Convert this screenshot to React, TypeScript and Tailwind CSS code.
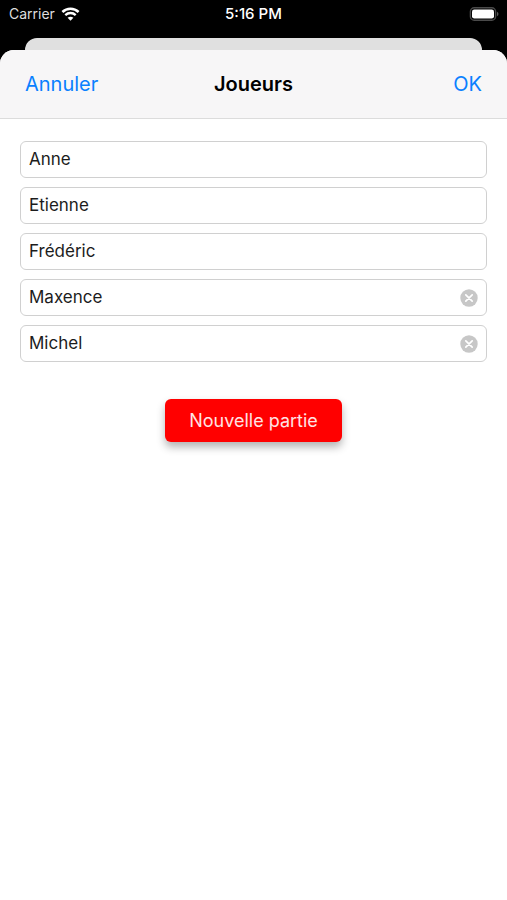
import { useState } from "react";

interface Player {
  id: number;
  name: string;
  clearable: boolean;
}

const INITIAL_PLAYERS: Player[] = [
  { id: 1, name: "Anne", clearable: false },
  { id: 2, name: "Etienne", clearable: false },
  { id: 3, name: "Frédéric", clearable: false },
  { id: 4, name: "Maxence", clearable: true },
  { id: 5, name: "Michel", clearable: true },
];

function WifiIcon() {
  return (
    <svg width="19" height="14" viewBox="0 0 18 14" fill="none" stroke="white" aria-hidden="true">
      <path d="M0.9 5C5.4 0.5 12.6 0.5 17.1 5" strokeWidth="2.5" />
      <path d="M3.8 8.1C6.7 5.3 11.3 5.3 14.2 8.1" strokeWidth="2.3" />
      <path d="M9 13.7L6.1 10.8C7.8 9.3 10.2 9.3 11.9 10.8Z" fill="white" stroke="none" />
    </svg>
  );
}

function BatteryIcon() {
  return (
    <svg width="30" height="14" viewBox="0 0 30 14" fill="none" aria-hidden="true">
      <rect x="1.4" y="0.8" width="25.2" height="12.4" rx="3.8" stroke="#4a4a4a" strokeWidth="1.4" />
      <rect x="3" y="2.4" width="22" height="9.2" rx="2.3" fill="white" />
      <path d="M28 4.8C30 5.6 30 8.4 28 9.2Z" fill="#5a5a5a" />
    </svg>
  );
}

function ClearIcon() {
  return (
    <svg width="18" height="18" viewBox="0 0 18 18" fill="none" aria-hidden="true">
      <circle cx="9" cy="9" r="8.7" fill="#c7c7c7" />
      <path d="M5.8 5.8L12.2 12.2M12.2 5.8L5.8 12.2" stroke="white" strokeWidth="1.7" strokeLinecap="round" />
    </svg>
  );
}

function StatusBar() {
  return (
    <div className="grid h-[38px] grid-cols-3 items-start px-2 pt-1 text-sm leading-5 text-white">
      <div className="flex items-center gap-1.5 pl-px text-[#dedede]">
        <span>Carrier</span>
        <WifiIcon />
      </div>
      <div className="text-center text-[15px] font-medium">5:16 PM</div>
      <div className="flex h-5 items-center justify-end">
        <BatteryIcon />
      </div>
    </div>
  );
}

export default function App() {
  const [players, setPlayers] = useState(INITIAL_PLAYERS);

  const rename = (id: number, name: string) => {
    setPlayers((list) => list.map((p) => (p.id === id ? { ...p, name } : p)));
  };

  return (
    <div className="flex min-h-screen flex-col bg-black font-['Inter','Liberation_Sans',sans-serif]">
      <StatusBar />

      {/* Edge of the screen behind the sheet */}
      <div className="mx-[25px] h-3 rounded-t-xl bg-[#e0e0e0]" />

      <main className="flex flex-1 flex-col overflow-hidden rounded-t-[14px] bg-white">
        <header className="grid h-[69px] grid-cols-3 items-center border-b border-[#dcdcdc] bg-[#f7f6f7] px-[25px] text-xl">
          <button type="button" className="justify-self-start text-[#0a80ff]">
            Annuler
          </button>
          <h1 className="text-center font-semibold text-black">Joueurs</h1>
          <button type="button" className="justify-self-end text-[#0a80ff]">
            OK
          </button>
        </header>

        <form className="flex flex-col px-5 pt-[22px]" onSubmit={(e) => e.preventDefault()}>
          <div className="flex flex-col gap-[9px]">
            {players.map((player) => (
              <div key={player.id} className="relative">
                <input
                  type="text"
                  aria-label={`Joueur ${player.id}`}
                  value={player.name}
                  onChange={(e) => rename(player.id, e.target.value)}
                  className="block h-[37px] w-full rounded-md border border-[#d0d0d0] bg-white px-2 pb-0.5 text-[17px] text-[#1c1c1c] outline-none"
                />
                {player.clearable && (
                  <button
                    type="button"
                    aria-label="Effacer"
                    onClick={() => rename(player.id, "")}
                    className="absolute inset-y-0 right-[9px] flex items-center"
                  >
                    <ClearIcon />
                  </button>
                )}
              </div>
            ))}
          </div>

          <button
            type="submit"
            className="mt-[37px] h-[43px] self-center rounded-md bg-[#ff0000] px-6 text-lg text-[#ffe3e3] shadow-[0_5px_8px_rgba(0,0,0,0.3)]"
          >
            Nouvelle partie
          </button>
        </form>
      </main>
    </div>
  );
}
